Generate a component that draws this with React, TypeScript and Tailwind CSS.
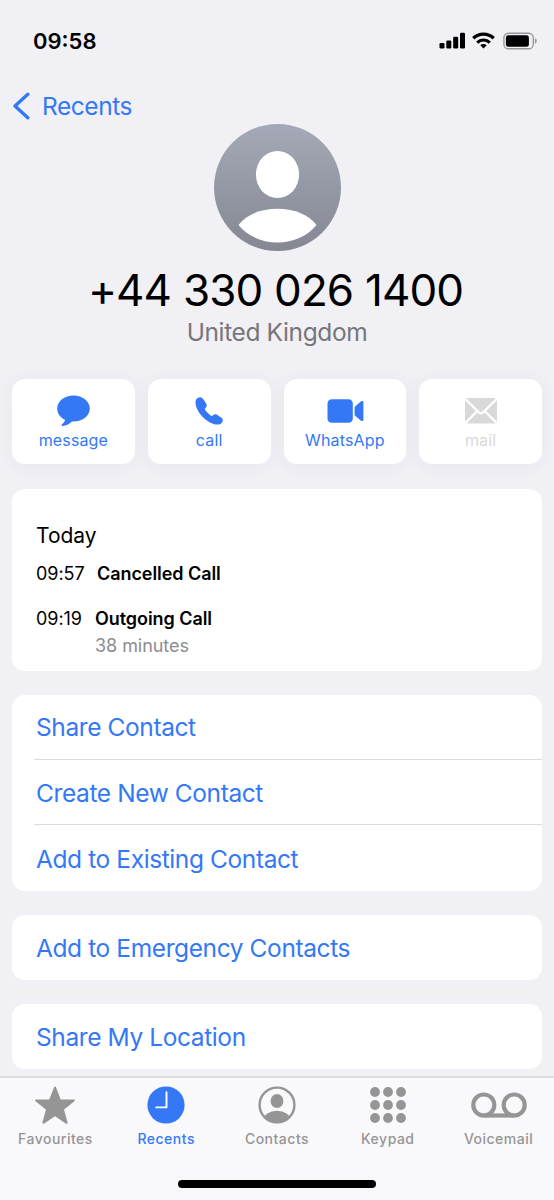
import React from 'react';

interface Action {
  label: string;
  icon: React.ReactNode;
  disabled?: boolean;
}

interface Call {
  time: string;
  timeWidth: string;
  title: string;
  detail?: string;
}

interface Tab {
  label: string;
  icon: React.ReactNode;
  active?: boolean;
}

const MessageIcon = () => (
  <svg width="34" height="32" viewBox="-0.500 0.500 34 32" fill="currentColor">
    <path d="M17 1C8 1 .7 6.700.7 14c0 4.700 2.900 8.800 7.300 11.100.7.400.6 1-.1 2-.8 1.300-1.800 2.300-2.500 3-.8.800-.3 1.500.8 1.400 3.400-.3 6.300-2 8.700-4 .5-.4.8-.5 1.400-.5h.7c9.200 0 16.300-5.700 16.300-13S26 1 17 1z" />
  </svg>
);

const PhoneIcon = () => (
  <svg width="28" height="28" viewBox="0 0 28 28" fill="currentColor">
    <path d="M7.700 19.900C12.500 24.700 18.500 27.600 22.700 27.600c2 0 3.500-.8 4.500-2.300.4-.7.6-1.400.6-2.200 0-1-.4-1.700-1.400-2.400l-4-2.700c-.8-.6-1.500-.8-2.200-.7-.7 0-1.300.3-1.900.8l-1 .7c-.4.300-.8.300-1.300 0-1.100-.7-2.100-1.600-3.200-2.700s-2-2.200-2.700-3.300c-.3-.5-.3-.9 0-1.300l.8-1c.5-.6.8-1.200.9-1.900.1-.7-.2-1.400-.7-2.200L8.300 2.200C6.900.7 5.900.3 5 .3c-.8 0-1.500.2-2.200.6C1.200 1.900.5 3.200.5 5.200c0 4.200 2.400 9.900 7.200 14.700z" />
  </svg>
);

const VideoIcon = () => (
  <svg width="39" height="24" viewBox="-2 0 39 24" fill="currentColor">
    <rect x="0.500" y="0.300" width="25.300" height="23.400" rx="4.300" />
    <path d="M27.600 8.700v6.700c0 .6.200 1.100.7 1.500l5.500 4.600c1.200 1 2.600.6 2.600-.8V3.400c0-1.400-1.400-1.800-2.600-.8l-5.500 4.600c-.5.400-.7.900-.7 1.500z" />
  </svg>
);

const MailIcon = () => (
  <svg width="32" height="26" viewBox="0 0 32 26" fill="none">
    <rect width="32" height="25.500" rx="2.500" fill="currentColor" />
    <path d="M.6 1.200l13.600 13.400q1.800 1.600 3.600 0L31.400 1.200M.6 24.700l11.600-11.600M31.400 24.700L19.800 13.100" stroke="#fff" strokeWidth="2.200" />
  </svg>
);

const StarIcon = () => (
  <svg width="40" height="38" viewBox="0 0 40 38" fill="currentColor" stroke="currentColor" strokeWidth="2" strokeLinejoin="round">
    <path d="M20 1.500l4.900 12.700 13.900.2L27.900 23.200l3.700 13.600L20 29 8.400 36.800l3.700-13.600L1.200 14.400l13.900-.2z" />
  </svg>
);

const ClockIcon = () => (
  <svg width="38" height="38" viewBox="0 0 38 38">
    <circle cx="19" cy="19" r="18.600" fill="currentColor" />
    <path d="M19.500 6.200v15.200H9.200" fill="none" stroke="#fff" strokeWidth="1.900" strokeLinecap="round" strokeLinejoin="round" />
  </svg>
);

const ContactIcon = () => (
  <svg width="38" height="38" viewBox="0 0 38 38" fill="currentColor">
    <defs>
      <clipPath id="contact-body">
        <circle cx="19" cy="19" r="17" />
      </clipPath>
    </defs>
    <circle cx="19" cy="19" r="17.400" fill="none" stroke="currentColor" strokeWidth="2.400" />
    <ellipse cx="19" cy="15" rx="6.400" ry="7" />
    <ellipse cx="19" cy="34" rx="13.600" ry="9.200" clipPath="url(#contact-body)" />
  </svg>
);

const KeypadIcon = () => (
  <svg width="38" height="38" viewBox="0 0 38 38" fill="currentColor">
    {[6, 19, 32].map((y) =>
      [6, 19, 32].map((x) => <circle key={`${x}-${y}`} cx={x} cy={y} r="4.900" />)
    )}
  </svg>
);

const VoicemailIcon = () => (
  <svg width="56" height="26" viewBox="0 0 56 26" fill="none" stroke="currentColor" strokeWidth="4.200">
    <circle cx="12.800" cy="13" r="10.500" />
    <circle cx="43.200" cy="13" r="10.500" />
    <path d="M12.800 23.500h30.400" />
  </svg>
);

const ACTIONS: Action[] = [
  { label: 'message', icon: <MessageIcon /> },
  { label: 'call', icon: <PhoneIcon /> },
  { label: 'WhatsApp', icon: <VideoIcon /> },
  { label: 'mail', icon: <MailIcon />, disabled: true },
];

const CALLS: Call[] = [
  { time: '09:57', timeWidth: 'w-[61px]', title: 'Cancelled Call' },
  { time: '09:19', timeWidth: 'w-[59px]', title: 'Outgoing Call', detail: '38 minutes' },
];

const GROUPS = [
  ['Share Contact', 'Create New Contact', 'Add to Existing Contact'],
  ['Add to Emergency Contacts'],
  ['Share My Location'],
];

const TABS: Tab[] = [
  { label: 'Favourites', icon: <StarIcon /> },
  { label: 'Recents', icon: <ClockIcon />, active: true },
  { label: 'Contacts', icon: <ContactIcon /> },
  { label: 'Keypad', icon: <KeypadIcon /> },
  { label: 'Voicemail', icon: <VoicemailIcon /> },
];

const StatusBar = () => (
  <div className="flex h-[82px] shrink-0 items-center justify-between pl-[33px] pr-4">
    <span className="text-[22px] font-semibold text-black">09:58</span>
    <div className="flex items-center gap-2 pb-px">
      <svg className="-mr-0.5" width="27" height="17" viewBox="0 0 27 17">
        <rect x="0.500" y="11" width="5" height="5.500" rx="1.300" />
        <rect x="7.300" y="8.500" width="5" height="8" rx="1.300" />
        <rect x="14.200" y="4.700" width="5" height="11.800" rx="1.300" />
        <rect x="21" y="0.700" width="5" height="15.800" rx="1.300" />
      </svg>
      <svg width="23" height="17" viewBox="0 0 23 17">
        <path d="M1.300 6.200a14.600 14.600 0 0 1 20.400 0" fill="none" stroke="#000" strokeWidth="3.300" />
        <path d="M5.200 10.600a9 9 0 0 1 12.600 0" fill="none" stroke="#000" strokeWidth="3.100" />
        <path d="M11.500 16.500l-3.200-3.200a4.600 4.600 0 0 1 6.400 0z" />
      </svg>
      <svg width="35" height="18" viewBox="0 0 35 18">
        <rect x="0.900" y="1.200" width="29.400" height="15.600" rx="4.600" fill="none" stroke="#98989c" strokeWidth="1.400" />
        <rect x="2.900" y="3.300" width="23" height="11.500" rx="2.400" />
        <path d="M31.900 6.300c1.200.5 1.900 1.500 1.900 2.700s-.7 2.200-1.900 2.700z" fill="#98989c" />
      </svg>
    </div>
  </div>
);

const Avatar = () => (
  <svg width="127" height="127" viewBox="0 0 127 127">
    <defs>
      <linearGradient id="avatar-fill" x1="0" y1="0" x2="0" y2="1">
        <stop offset="0" stopColor="#a5a9b7" />
        <stop offset="1" stopColor="#858892" />
      </linearGradient>
    </defs>
    <circle cx="63.500" cy="63.500" r="63.500" fill="url(#avatar-fill)" />
    <ellipse cx="63.500" cy="50.500" rx="21.600" ry="23.600" fill="#fff" />
    <path d="M24.500 101C32 91 46 84.700 63.500 84.700S95 91 102.500 101C94 111.500 79.500 118.500 63.500 118.500S33 111.500 24.500 101z" fill="#fff" />
  </svg>
);

export default function App() {
  return (
    <div className="flex h-[1200px] w-[554px] flex-col overflow-hidden bg-[#f1f0f5] font-['Inter',sans-serif] text-black">
      <StatusBar />

      {/* Back navigation */}
      <button type="button" className="-mt-px flex h-[43px] shrink-0 items-center gap-3 pl-3 pt-[7px] text-[#3478f6]">
        <svg width="18" height="28" viewBox="0 0 18 28" fill="none" stroke="currentColor" strokeWidth="3.400" strokeLinecap="round" strokeLinejoin="round">
          <path d="M15.800 2.200L3 14l12.800 11.800" />
        </svg>
        <span className="text-[24.500px] leading-7 tracking-[-0.450px]">Recents</span>
      </button>

      {/* Caller */}
      <header className="flex shrink-0 flex-col items-center">
        <Avatar />
        <h1 className="mt-3 pr-[3px] text-[44px] leading-[54px] tracking-[-0.950px] [word-spacing:0.500px]">+44 330 026 1400</h1>
        <p className="text-[24.500px] leading-[30px] tracking-[-0.380px] text-[#76767a]">United Kingdom</p>
      </header>

      <main className="flex min-h-0 flex-1 flex-col gap-6 px-3 pt-8">
        <div className="mb-[0.500px] grid h-[85px] shrink-0 grid-cols-4 gap-[13px]">
          {ACTIONS.map((action) => (
            <button
              key={action.label}
              type="button"
              disabled={action.disabled}
              className={`flex flex-col items-center rounded-[13px] bg-white pt-[14px] shadow-[0_2px_20px_rgba(60,60,90,0.050)] ${
                action.disabled ? 'text-[#d9d9d9]' : 'text-[#3478f6]'
              }`}
            >
              <span className="flex h-9 items-center">{action.icon}</span>
              <span className="text-base leading-[23px] tracking-[0.150px]">{action.label}</span>
            </button>
          ))}
        </div>

        {/* Call history */}
        <section className="flex h-[182px] shrink-0 flex-col rounded-[13px] bg-white pl-6 pt-8">
          <h2 className="text-[21px] leading-[29px]">Today</h2>
          <div className="mt-[10.500px] flex flex-col gap-[18px]">
            {CALLS.map((call) => (
              <div key={call.time} className="flex text-[18px] leading-[27px] tracking-[-0.060px]">
                <span className={`shrink-0 ${call.timeWidth}`}>{call.time}</span>
                <div>
                  <p className="font-semibold">{call.title}</p>
                  {call.detail && <p className="text-[#8b8b90]">{call.detail}</p>}
                </div>
              </div>
            ))}
          </div>
        </section>

        {GROUPS.map((group) => (
          <ul key={group[0]} className="shrink-0 rounded-[13px] bg-white pl-[22px]">
            {group.map((item) => (
              <li
                key={item}
                className="flex h-[65.400px] items-center border-b border-[#dcdcde] pl-0.5 pt-0.5 text-[24.500px] tracking-[-0.400px] text-[#3478f6] last:border-b-0"
              >
                {item}
              </li>
            ))}
          </ul>
        ))}
      </main>

      {/* Tab bar */}
      <nav className="flex h-[124px] shrink-0 flex-col items-center border-t-2 border-[#dddde0] bg-[#f9f8fa]">
        <div className="grid w-full grid-cols-5">
          {TABS.map((tab) => (
            <button
              key={tab.label}
              type="button"
              className={`flex flex-col items-center pt-2 text-sm font-medium tracking-[0.500px] ${
                tab.active ? 'text-[#3478f6]' : 'text-[#959595]'
              }`}
            >
              <span className="flex h-[38px] items-center">{tab.icon}</span>
              <span className="mt-[5px] leading-5">{tab.label}</span>
            </button>
          ))}
        </div>
        <div className="mb-3 mt-auto h-2 w-[198px] rounded-full bg-black" />
      </nav>
    </div>
  );
}
